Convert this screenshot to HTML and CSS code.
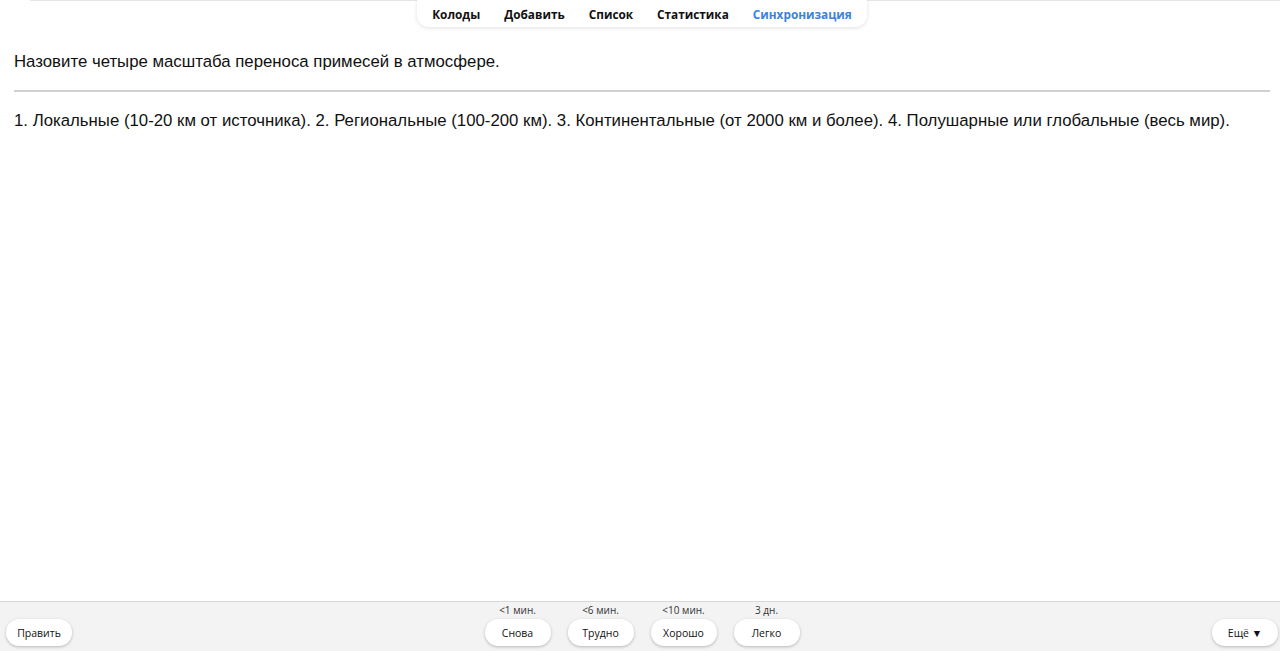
FILE: index.html
```html
<!DOCTYPE html>
<html lang="ru">
<head>
    <meta charset="UTF-8">
    <meta name="viewport" content="width=device-width, initial-scale=1.0">
    <title>Anki</title>
    <link rel="stylesheet" href="styles.css">
</head>
<body>

    <div class="topline"></div>
    <nav class="toolbar">
        <a href="#">Колоды</a>
        <a href="#">Добавить</a>
        <a href="#">Список</a>
        <a href="#">Статистика</a>
        <a href="#" class="sync">Синхронизация</a>
    </nav>

    <main class="card">
        <div class="question">Назовите четыре масштаба переноса примесей в атмосфере.</div>
        <hr id="answer">
        <div class="answer">1. Локальные (10-20 км от источника). 2. Региональные (100-200 км). 3. Континентальные (от 2000 км и более). 4. Полушарные или глобальные (весь мир).</div>
    </main>

    <footer class="bottombar">
        <div class="side">
            <button>Править</button>
        </div>
        <div class="ease">
            <div class="ease-item"><span>&lt;1 мин.</span><button>Снова</button></div>
            <div class="ease-item"><span>&lt;6 мин.</span><button>Трудно</button></div>
            <div class="ease-item"><span>&lt;10 мин.</span><button>Хорошо</button></div>
            <div class="ease-item"><span>3 дн.</span><button>Легко</button></div>
        </div>
        <div class="side right">
            <button>Ещё ▼</button>
        </div>
    </footer>

</body>
</html>
```

FILE: styles.css
```css
* {
    box-sizing: border-box;
}

html, body {
    margin: 0;
    padding: 0;
    height: 100%;
}

body {
    display: flex;
    flex-direction: column;
    background: white;
    font-family: "Open Sans", "Noto Sans", sans-serif;
    position: relative;
}

.topline {
    position: absolute;
    top: 0;
    left: 30px;
    right: 0;
    height: 1px;
    background: #e4e4e4;
}

.toolbar {
    align-self: center;
    display: flex;
    padding: 0 3px;
    margin-left: 4px;
    height: 27px;
    align-items: center;
    background: white;
    border-radius: 0 0 12px 12px;
    box-shadow: 0 1px 4px rgba(0, 0, 0, 0.12);
    position: relative;
}

.toolbar a {
    padding: 0 12px;
    font-size: 11.8px;
    font-weight: 700;
    color: #111;
    text-decoration: none;
}

.toolbar a.sync {
    color: #3b82e0;
}

.card {
    flex: 1;
    padding: 24px 10px 0 14px;
    font-family: "Liberation Sans", Arial, sans-serif;
    font-size: 16.8px;
    color: #111;
}

.question {
    line-height: 22px;
}

hr {
    margin: 17px 0 18px 0;
    border: none;
    border-top: 2px solid #d0d0d0;
}

.answer {
    line-height: 22px;
}

.bottombar {
    height: 50px;
    border-top: 1px solid #d8d8d8;
    background: #f3f3f3;
    display: flex;
    align-items: flex-end;
    padding: 0 2px 5px 6px;
}

.side {
    flex: 1;
    display: flex;
}

.side.right {
    justify-content: flex-end;
}

.ease {
    display: flex;
    gap: 17px;
    margin-left: 0;
}

.ease-item {
    display: flex;
    flex-direction: column;
    align-items: center;
}

.ease-item span {
    font-size: 10px;
    color: #333;
    margin-bottom: 2px;
}

button {
    height: 27px;
    width: 66px;
    padding: 0;
    border: none;
    border-radius: 13px;
    background: white;
    box-shadow: 0 1px 3px rgba(0, 0, 0, 0.25);
    font-family: "Open Sans", "Noto Sans", sans-serif;
    font-size: 10.5px;
    color: #111;
    cursor: pointer;
}
```
